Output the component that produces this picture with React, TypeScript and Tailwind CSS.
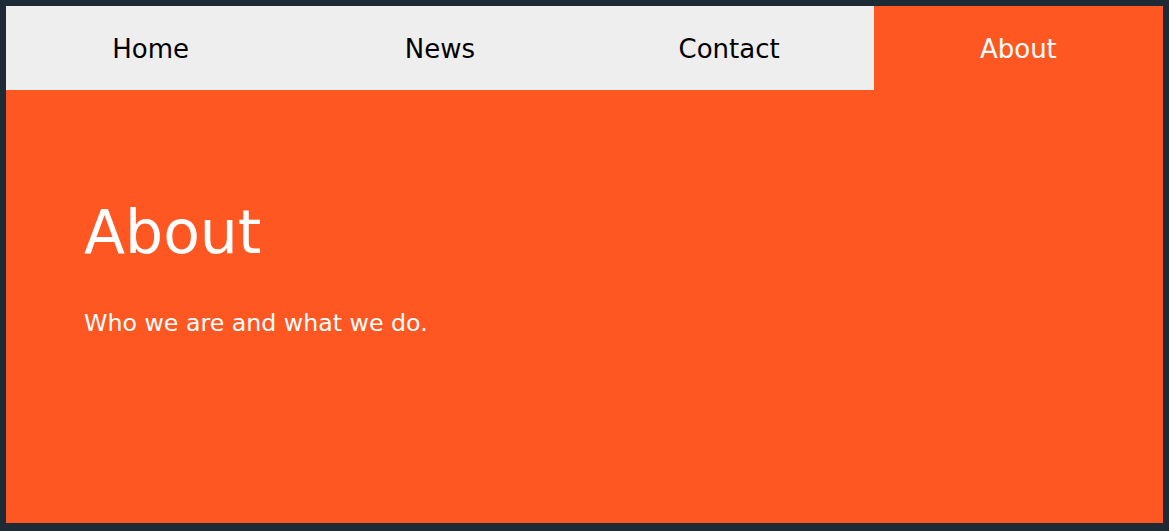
const tabs = ['Home', 'News', 'Contact', 'About'];

export default function App() {
  const active = 'About';
  return (
    <div
      className="h-[531px] w-full bg-[#1e2a35] px-[6px] pt-[6px] pb-[8px]"
      style={{ fontFamily: '"DejaVu Sans", Verdana, sans-serif' }}
    >
      <div className="flex h-full flex-col bg-[#ff5722]">
        <nav className="flex h-[84px] bg-[#eeeeee]">
          {tabs.map((tab) => (
            <button
              key={tab}
              className={`flex flex-1 items-center justify-center pt-[2px] text-[26px] leading-none ${
                tab === active ? 'bg-[#ff5722] text-white' : 'text-black'
              }`}
            >
              {tab}
            </button>
          ))}
        </nav>
        <section className="flex-1 pl-[78px] pt-[112px] text-white">
          <h1 className="text-[60px] leading-none">About</h1>
          <p className="mt-[50px] text-[23.7px] leading-none">Who we are and what we do.</p>
        </section>
      </div>
    </div>
  );
}
